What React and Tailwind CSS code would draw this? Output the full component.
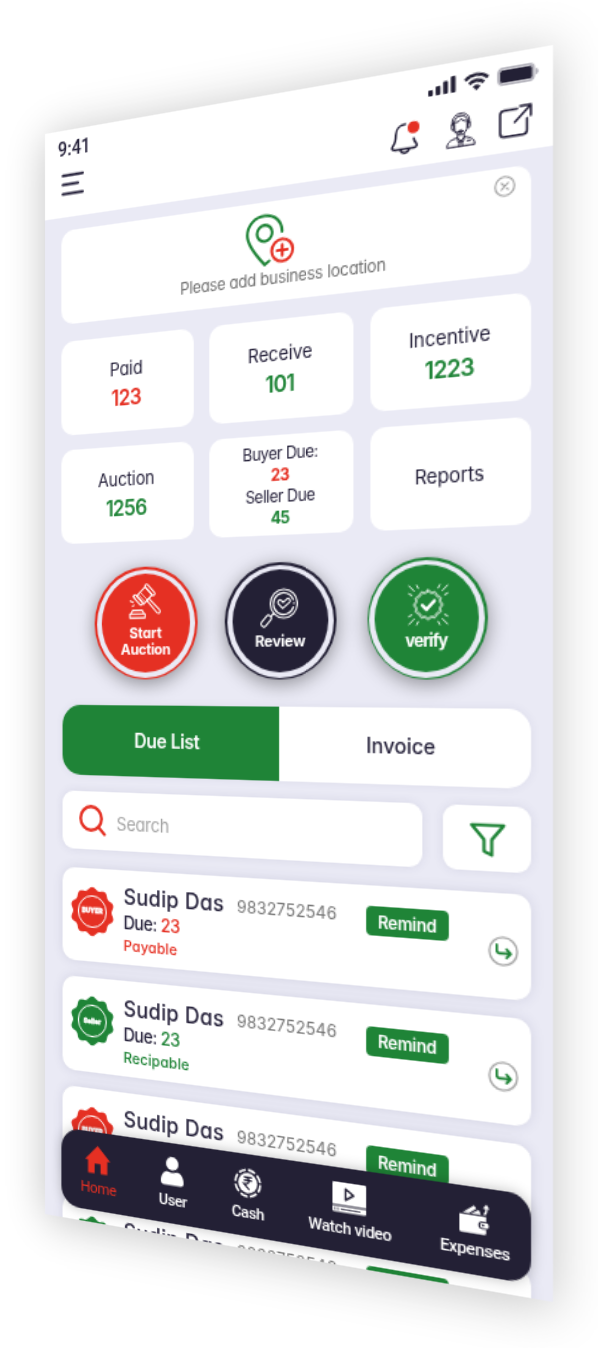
import React from "react";

const wavy = (c, r, amp, lobes) => {
  const pts = [];
  for (let i = 0; i < 180; i++) {
    const a = (i / 180) * Math.PI * 2;
    const k = r + amp * Math.cos(lobes * a);
    pts.push((c + k * Math.sin(a)).toFixed(2) + " " + (c - k * Math.cos(a)).toFixed(2));
  }
  return "M" + pts.join("L") + "Z";
};

const SEAL = wavy(18, 17.1, 1.1, 10);
const ROSETTE = wavy(14, 9.3, 0.5, 12);
const INNER_ROSETTE = wavy(14, 8.2, 0.35, 12);

function StatusBar() {
  return (
    <div className="flex h-[29px] items-start justify-between pl-[11px] pr-[8px]">
      <span className="mt-[4.5px] font-['Roboto',sans-serif] text-[14px] font-medium leading-[18px] text-[#25213a]">9:41</span>
      <div className="mt-[9px] flex h-[11px] items-center text-[#232035]">
        <svg width="19" height="11" viewBox="0 0 19 11" fill="currentColor">
          <rect x="0" y="7" width="3.2" height="4" rx="0.8" />
          <rect x="5.1" y="5" width="3.2" height="6" rx="0.8" />
          <rect x="10.2" y="2.6" width="3.2" height="8.4" rx="0.8" />
          <rect x="15.3" y="0" width="3.2" height="11" rx="0.8" />
        </svg>
        <svg className="ml-[5px]" width="17" height="12" viewBox="0 0 17 12" fill="none" stroke="currentColor" strokeWidth="2.1">
          <path d="M0.9 4.4C5 0.5 12 0.5 16.1 4.4" />
          <path d="M3.6 7.2C6.3 4.7 10.7 4.7 13.4 7.2" />
          <path d="M5.9 9.4C7.4 8 9.6 8 11.1 9.4L8.5 11.9Z" fill="currentColor" stroke="none" />
        </svg>
        <svg className="ml-[5.500px]" width="28" height="12" viewBox="0 0 28 12">
          <rect x="0.9" y="0.9" width="22.8" height="10.2" rx="2.8" fill="none" stroke="#b5b4bd" strokeWidth="1.7" />
          <rect x="1.9" y="1.9" width="20.8" height="8.2" rx="1.6" fill="#232035" />
          <path d="M25 4c1.2 .3 1.8 1 1.8 2s-.6 1.700-1.800 2z" fill="#b5b4bd" />
        </svg>
      </div>
    </div>
  );
}

function Header() {
  return (
    <header className="h-[65px] bg-white">
      <StatusBar />
      <div className="flex items-start pl-[14px] pr-[13.500px] text-[#25213a]">
        <svg className="mt-[3px]" width="20" height="18" viewBox="0 0 20 18" stroke="currentColor" strokeWidth="2" strokeLinecap="round">
          <path d="M1.200 1.800H18M1.200 8.600H14M1.200 15.500H18" />
        </svg>
        <div className="ml-auto flex items-start">
          <svg className="mt-[5px] overflow-visible" width="20" height="23" viewBox="0 0 20 23" fill="none" stroke="currentColor" strokeWidth="1.500" strokeLinecap="round" strokeLinejoin="round">
            <path d="M10.200 2C6.300 1.900 3.900 4.600 3.800 8.200c-.1 4.200-.5 5.600-2 7.200-1.400 1.600-.6 3 1.300 3h13.200c1.900 0 2.700-1.400 1.300-3-.8-.9-1.300-1.800-1.500-3.200" />
            <path d="M7 19.300c.8 2.600 5 2.600 5.800 0" />
            <circle cx="16" cy="4.800" r="4" fill="#e53023" stroke="none" />
          </svg>
          <svg className="ml-[18px] mt-[5px]" width="20" height="23" viewBox="0 0 20 23" fill="none" stroke="currentColor" strokeWidth="0.950" strokeLinecap="round" strokeLinejoin="round">
            <path d="M4.300 7.800C3.600 3.200 6 .7 10 .7s6.400 2.500 5.700 7.100" />
            <path d="M5.500 6.500C5.700 3.500 7.200 2.200 10 2.200s4.300 1.300 4.500 4.300" />
            <path d="M5.500 6.200c2 .3 3.600-.4 4.600-1.900 1 1.200 2.600 1.900 4.400 1.900" />
            <path d="M5.700 7.500v2c0 3 1.900 5.400 4.300 5.400s4.300-2.400 4.300-5.400v-2" />
            <rect x="3.900" y="6.700" width="1.700" height="4.200" rx="0.800" />
            <rect x="14.400" y="6.700" width="1.700" height="4.200" rx="0.800" />
            <path d="M4.900 11c.5 1.500 1.800 2 3.700 1.900" />
            <ellipse cx="9.900" cy="12.600" rx="1.700" ry="0.700" fill="currentColor" />
            <path d="M7.800 14.700v2L10 18.900l2.200-2.200v-2" />
            <path d="M7.600 16.500C3.200 17.500.9 18.300.7 22.300h18.600c-.2-4-2.500-4.800-6.900-5.800" />
            <path d="M7.700 16.700l.7 3 1.600-1 1.600 1 .7-3M9.300 19.200l-.5 3M10.700 19.200l.5 3M14.300 19.300h2" />
          </svg>
          <svg className="ml-[15px] mt-[6px]" width="22" height="22" viewBox="0 0 22 22" fill="none" stroke="currentColor" strokeWidth="1.500" strokeLinecap="round" strokeLinejoin="round">
            <path d="M12 2.500H3.600C1.900 2.500 1 3.400 1 5v12.200C1 18.800 1.900 19.700 3.600 19.700h12.200c1.700 0 2.600-.9 2.600-2.500V9.500" />
            <path d="M10.500 11L20.800 1.200M14 1.100h6.900v7" />
          </svg>
        </div>
      </div>
    </header>
  );
}

function LocationCard() {
  return (
    <section className="relative flex h-[70px] flex-col items-center rounded-[10px] bg-white pt-[8px]">
      <svg className="mr-[14.500px]" width="37" height="37" viewBox="0 0 37 37" fill="none" strokeWidth="2.100" strokeLinecap="round" strokeLinejoin="round">
        <g stroke="#1f8437">
          <path d="M17.600 33.500l-3.400 2.300C8.500 29.500 1.200 20.500 1.200 14 1.200 6.500 7 1.500 14.300 1.500S27.400 6.500 27.200 14" />
          <circle cx="14.200" cy="13.800" r="5.700" />
        </g>
        <g stroke="#e53023">
          <circle cx="27.300" cy="27" r="7.800" />
          <path d="M23.500 27h7.600M27.300 23.200v7.600" />
        </g>
      </svg>
      <p className="mt-[1px] text-[11.5px] leading-[17px] tracking-[-0.25px] text-[#6f6f6f]">Please add business location</p>
      <svg className="absolute right-[9.700px] top-[5.200px]" width="14" height="14" viewBox="0 0 14 14" fill="none" stroke="#a3a3a3" strokeWidth="1.100" strokeLinecap="round">
        <circle cx="7" cy="7" r="6.300" />
        <path d="M4.800 4.800l4.400 4.400M9.200 4.800L4.800 9.200" />
      </svg>
    </section>
  );
}

function Stat({ label, value, red }) {
  return (
    <div className="flex flex-col items-center justify-center rounded-[10px] bg-white">
      <span className="text-[13px] leading-[22px] tracking-[-0.1px]">{label}</span>
      {value && (
        <span className={"text-[15.500px] font-semibold leading-[22px] tracking-[-0.65px] " + (red ? "text-[#e53023]" : "text-[#1f8437]")}>{value}</span>
      )}
    </div>
  );
}

function Stats() {
  return (
    <section className="mt-[12.500px] grid grid-cols-3 grid-rows-[70px_70px] gap-x-[12px] gap-y-[11.600px]">
      <Stat label="Paid" value="123" red />
      <Stat label="Receive" value="101" />
      <Stat label="Incentive" value="1223" />
      <Stat label="Auction" value="1256" />
      <div className="flex flex-col items-center justify-center rounded-[10px] bg-white pt-[2px] text-[11.5px] leading-[15px] tracking-[-0.4px]">
        <span>Buyer Due:</span>
        <span className="font-bold text-[#e53023] tracking-[-0.7px]">23</span>
        <span>Seller Due</span>
        <span className="font-bold text-[#1f8437] tracking-[-0.7px]">45</span>
      </div>
      <Stat label="Reports" />
    </section>
  );
}

function Round({ ring, fill, pad, children }) {
  return (
    <div className={"h-[82.300px] w-[82.300px] rounded-full p-[1.800px] shadow-[0_3px_14px_rgba(0,0,0,0.4)] " + ring}>
      <div className="h-full w-full rounded-full bg-[#eaeaf5] p-[3.600px]">
        <div className={"flex h-full w-full flex-col items-center rounded-full text-center text-[11px] font-bold leading-[12.500px] text-white " + fill + " " + pad}>
          {children}
        </div>
      </div>
    </div>
  );
}

function Actions() {
  return (
    <section className="mt-[19px] flex gap-[21.800px] pl-[28.400px]">
      <Round ring="bg-[#e53023]" fill="bg-[#e53023]" pad="pt-[7px]">
        <svg width="27" height="26" viewBox="0 0 27 26" fill="none" stroke="#fff" strokeWidth="1.050" strokeLinejoin="round" strokeLinecap="round">
          <path d="M6.500 9.200L13.300 2.600l5.700 5.900-6.800 6.600z" />
          <rect x="-1.300" y="-4.800" width="2.600" height="9.600" rx="1.300" transform="translate(7.600 12) rotate(-44)" />
          <rect x="-1.300" y="-5.200" width="2.600" height="10.400" rx="1.300" transform="translate(17.200 4.900) rotate(-44)" />
          <path d="M14.800 12.700l1.500-1.500M16.300 11.200l8.500 8.200c1.600 1.700-.4 3.700-2 2.100l-8-8.800" />
          <path d="M8.200 8.500l5 5M10 7l5 5" strokeWidth="0.700" />
          <path d="M3.300 19.600h7.600l1.700 2.600H1.700zM1 22.200h12.300v2.900H1z" />
          <path d="M1.300 12.800l2.400.9M3 16.600l1.400-.7M4 9.400l1 1.400" />
        </svg>
        <span className="mt-[3.500px] tracking-[-0.15px]">Start<br /><span className="tracking-[-0.3px]">Auction</span></span>
      </Round>
      <Round ring="bg-[#232035]" fill="bg-[#232035]" pad="pt-[12.500px] pr-[3px]">
        <svg width="29" height="29" viewBox="0 0 29 29" fill="none" stroke="#fff" strokeWidth="1.100" strokeLinejoin="round" strokeLinecap="round">
          <circle cx="18.500" cy="11" r="10" />
          <path d="M25.500 8.300A7.600 7.600 0 1 0 25.600 13.500M26 10.500v.6" />
          <path d="M17.700 14.300l-3.200-3.200c-1.300-1.600.8-3.500 2.300-2.200l1.200 1.300 2.800-2.400c1.600-1 3.300.9 2 2.300z" />
          <path d="M11.100 17.500l-2.200 2.300" />
          <rect x="-2" y="-4.600" width="4" height="9.200" rx="1.600" transform="translate(5.400 23) rotate(42)" />
        </svg>
        <span className="ml-[3px] mt-[2.500px] tracking-[-0.250px]">Review</span>
      </Round>
      <Round ring="bg-[#1f8437]" fill="bg-[#1f8437]" pad="pt-[13px]">
        <svg className="ml-[2px]" width="28" height="28" viewBox="0 0 28 28" fill="none" stroke="#fff" strokeWidth="0.900" strokeLinecap="round" strokeLinejoin="round">
          <path d={ROSETTE} />
          <path d={INNER_ROSETTE} strokeWidth="0.600" />
          <path d="M10 14.200l2.900 2.900 5.400-5.800" strokeWidth="2.200" />
          <path d="M.8 1l3.600 3.600M6.200 .8l1 2M.8 6.400l2 1M27.200 1l-3.600 3.600M21.800.8l-1 2M27.200 6.400l-2 1M.8 27l3.600-3.600M6.200 27.200l1-2M.8 21.600l2-1M27.200 27l-3.600-3.600M21.800 27.200l-1-2M27.200 21.600l-2-1" />
        </svg>
        <span className="mt-[4px] text-[11.500px] tracking-[-0.700px]">verify</span>
      </Round>
    </section>
  );
}

function Tabs() {
  return (
    <section className="ml-[1px] mt-[18.200px] flex h-[52.500px] overflow-hidden rounded-[15px] bg-white text-[14px] shadow-[0_0_6px_rgba(60,60,110,0.08)]">
      <div className="flex w-[172px] items-center justify-center bg-[#1f8437] pr-[1px] font-semibold tracking-[-0.35px] text-white">Due List</div>
      <div className="flex flex-1 items-center justify-center font-medium">Invoice</div>
    </section>
  );
}

function SearchRow() {
  return (
    <section className="ml-[1px] mt-[12.300px] flex h-[43px] justify-between">
      <div className="flex w-[273.500px] items-center rounded-[9px] bg-white pl-[14px] shadow-[0_0_7px_rgba(60,60,110,0.1)]">
        <svg width="23" height="23" viewBox="0 0 23 23" fill="none" stroke="#e53023" strokeWidth="2.400" strokeLinecap="round">
          <circle cx="10" cy="10" r="8.700" />
          <path d="M16.300 16.500l4.800 5" />
        </svg>
        <span className="ml-[8px] pt-[3px] text-[13px] text-[#a3a3a3] tracking-[-0.2px]">Search</span>
      </div>
      <div className="flex w-[58.500px] items-center justify-center rounded-[9px] bg-white pl-[2px] pt-[1px] shadow-[0_0_7px_rgba(60,60,110,0.1)]">
        <svg width="24" height="23" viewBox="0 0 24 23" fill="none" stroke="#1f8437" strokeWidth="2.100" strokeLinejoin="round">
          <path d="M1.200 1.800h21.200l-7.900 9.400v10.200l-5.100-2.400v-7.800z" />
        </svg>
      </div>
    </section>
  );
}

function Entry({ seller, compact }) {
  const tone = seller ? "text-[#1f8437]" : "text-[#e53023]";
  return (
    <li className="flex h-[69.500px] items-start rounded-[10px] bg-white pl-[7px] shadow-[0_0_8px_rgba(60,60,110,0.13)]">
      <div className={"relative mt-[13.700px] flex h-[36px] w-[36px] items-center justify-center " + tone}>
        <svg className="absolute inset-0 overflow-visible" width="36" height="36" viewBox="0 0 36 36" fill="currentColor">
          <path d={SEAL} />
          <circle cx="18" cy="18" r="11.600" fill="none" stroke="#fff" strokeWidth="1" />
        </svg>
        <span className="relative text-[5px] font-black leading-none text-white [-webkit-text-stroke:0.4px_white]">{seller ? "Seller" : "BUYER"}</span>
      </div>
      <div className="ml-[7.700px] w-[89.600px] pt-[9.500px] font-medium">
        <p className="whitespace-nowrap text-[16px] leading-[20px] tracking-[0.200px]">Sudip Das</p>
        <p className="text-[13px] leading-[19px] tracking-[-0.45px]">Due: <span className={tone}>23</span></p>
        <p className={"mt-[1px] text-[11px] leading-[13px] tracking-[0.080px] " + tone}>{seller ? "Recipable" : "Payable"}</p>
      </div>
      <p className="w-[94.300px] pt-[12px] text-[12px] leading-[18px] tracking-[0.050px] text-[#777777]">9832752546</p>
      <button className="mt-[14.200px] h-[20px] w-[57.800px] rounded-[4px] bg-[#1f8437] pt-[0.700px] text-center text-[11.500px] font-semibold leading-[20px] tracking-[-0.200px] text-white">Remind</button>
      {!compact && (
        <svg className="ml-[25.300px] mt-[28.300px]" width="20" height="20" viewBox="0 0 20 20" fill="none" strokeLinecap="round" strokeLinejoin="round">
          <circle cx="10" cy="10" r="9.100" stroke="#a8a8a8" strokeWidth="1.300" />
          <path d="M5.800 5.700v3.800c0 1.300.6 1.900 1.900 1.900h6.800M12.200 8.600l2.700 2.800-2.700 2.700" stroke="#1f8437" strokeWidth="1.600" />
        </svg>
      )}
    </li>
  );
}

function NavItem({ label, width, color = "font-medium text-white", children }) {
  return (
    <div className={"flex shrink-0 flex-col items-center " + width + " " + color}>
      {children}
      <span className="mt-[3px] whitespace-nowrap font-['Roboto',sans-serif] text-[11.500px] leading-[15px] tracking-[-0.350px]">{label}</span>
    </div>
  );
}

function Nav() {
  return (
    <nav className="absolute left-[13.700px] top-[745px] flex h-[57.800px] w-[347.300px] items-start rounded-[15px] bg-[#232035] pt-[9.800px] shadow-[0_0_10px_rgba(0,0,0,0.25)]">
      <NavItem label="Home" width="w-[62.500px]" color="text-[#e53023]">
        <svg width="21" height="21" viewBox="0 0 21 21" fill="currentColor">
          <path d="M10.500 0L21 10.800h-2.500V20.500h-5.600v-7.200H8v7.200H2.500v-9.700H0z" />
        </svg>
      </NavItem>
      <NavItem label="User" width="w-[58.500px]">
        <svg width="18" height="21" viewBox="0 0 18 21" fill="currentColor">
          <circle cx="9" cy="4.900" r="4.900" />
          <path d="M0 18c0-4.500 2.500-7.200 5.200-7.200 2.600 1 5 1 7.600 0C15.500 10.800 18 13.500 18 18c0 1.600-.8 2.500-2.300 2.500H2.300C.8 20.500 0 19.600 0 18z" />
        </svg>
      </NavItem>
      <NavItem label="Cash" width="w-[57.500px]">
        <svg width="21" height="21" viewBox="0 0 21 21" fill="none">
          <circle cx="10.500" cy="10.500" r="9.400" stroke="#fff" strokeWidth="1.600" strokeDasharray="5.600 1.780" />
          <circle cx="10.500" cy="10.500" r="7.200" fill="#fff" />
          <path d="M7.500 6.300h6.200M7.500 8.700h6.200M7.500 6.300c5.300-.2 5.300 4.800 0 4.800l4.300 4" stroke="#232035" strokeWidth="1.200" />
        </svg>
      </NavItem>
      <NavItem label="Watch video" width="w-[92px]">
        <svg width="24" height="21" viewBox="0 0 24 21" fill="#fff">
          <path d="M1 0h22a1 1 0 0 1 1 1v14.500H0V1a1 1 0 0 1 1-1z" />
          <path d="M0 16.500h24v3a1 1 0 0 1-1 1H1a1 1 0 0 1-1-1z" />
          <path d="M9.400 4.300v7.600l5.700-3.800z" fill="none" stroke="#232035" strokeWidth="1.300" strokeLinejoin="round" />
          <path d="M1.800 17.500v2M4 17.500v2M6 18.500h14" stroke="#232035" strokeWidth="0.700" />
        </svg>
      </NavItem>
      <NavItem label="Expenses" width="w-[80px]">
        <svg width="20" height="21" viewBox="0 0 20 21" fill="#fff">
          <path d="M0 8.700h17.800v3.300h-2.500a2.600 2.600 0 0 0 0 5.200h2.500v2.300a1.200 1.200 0 0 1-1.200 1.200H1.200A1.200 1.200 0 0 1 0 19.500z" />
          <path d="M2.300 7.700L9.800 2.200l1.500 2L6.500 7.700zM7.800 7.700l5.200-3 1.300 3z" />
          <path d="M15.700 7.300c1.400-1 1.600-2.200 1.600-3.800h-1.700L18 .4 20 3.500h-1.400c0 2-.2 3.400-1.500 4.300z" />
          <rect x="13.900" y="12.700" width="5.600" height="3.800" rx="1.600" />
          <circle cx="15.800" cy="14.600" r="0.800" fill="#232035" />
        </svg>
      </NavItem>
    </nav>
  );
}

export default function App() {
  return (
    <div className="h-[1348px] w-[598px] overflow-hidden bg-white">
      <div className="relative h-[812px] w-[375px] origin-top-left shadow-[0_3px_32px_rgba(0,0,0,0.24)] [transform:matrix3d(1.14702,-0.25423,0,-0.00037549,0,1.33005,0,0,0,0,1,0,45,134,0,1)]">
        <div className="relative h-full w-full overflow-hidden bg-[#eaeaf5] font-['Inter',sans-serif] text-[#25213a] [font-feature-settings:'cv11'_1]">
          <Header />
          <main className="pl-[14px] pr-[14px] pt-[10px]">
            <LocationCard />
            <Stats />
            <Actions />
            <Tabs />
            <SearchRow />
            <ul className="ml-[1px] mt-[13.500px] flex flex-col gap-[12px]">
              <Entry />
              <Entry seller />
              <Entry compact />
              <Entry seller compact />
            </ul>
          </main>
          <Nav />
        </div>
      </div>
    </div>
  );
}
